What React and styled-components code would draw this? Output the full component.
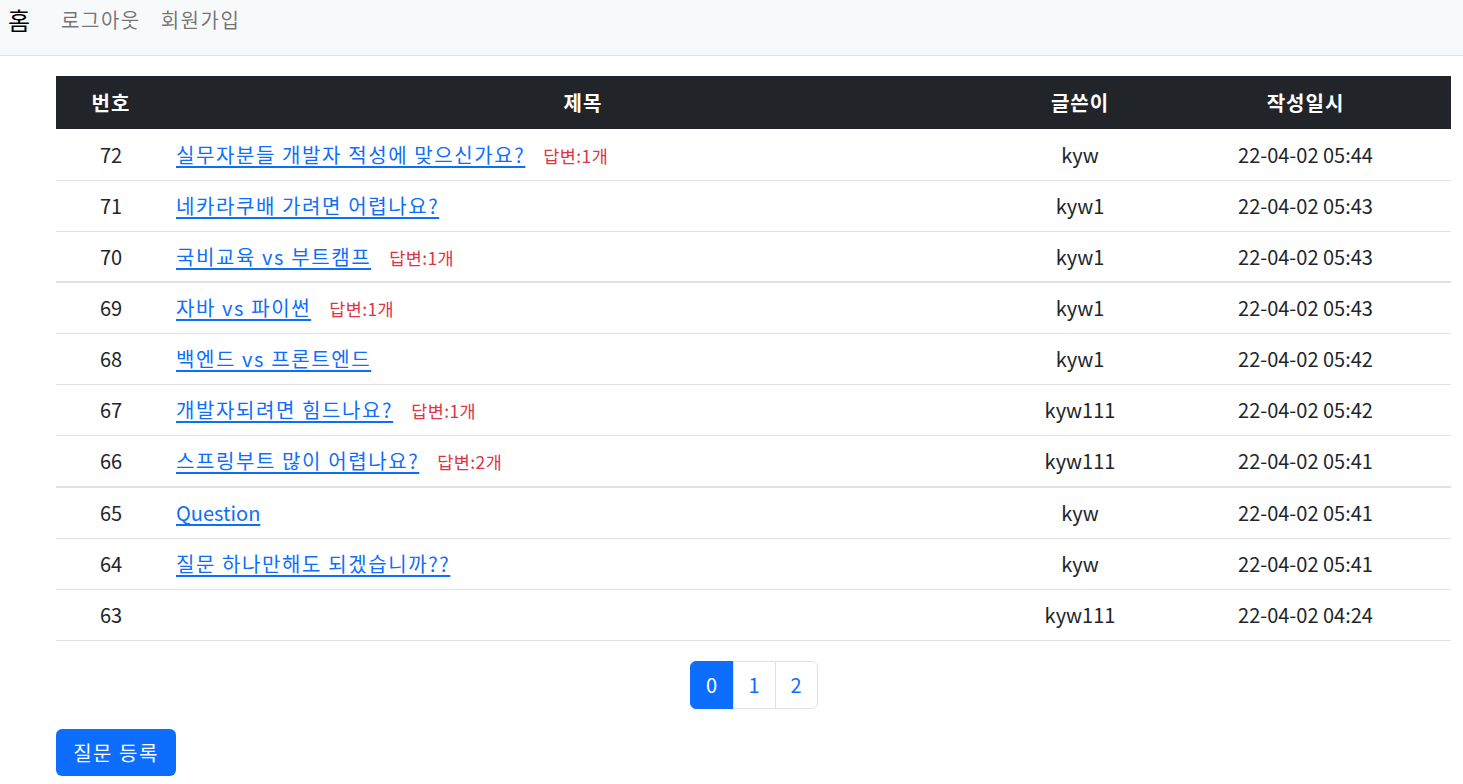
import React from 'react';
import styled, {createGlobalStyle} from 'styled-components';

const GlobalStyle = createGlobalStyle`
    *, *::before, *::after { box-sizing: border-box; }
    body {
        margin: 0;
        font-family: "Noto Sans CJK KR", "Noto Sans", sans-serif;
        color: #212529;
        background: #fff;
    }
`;

const Nav = styled.nav`
    height: 56px;
    background-color: #f8f9fa;
    border-bottom: 1px solid #dee2e6;
    display: flex;
    align-items: flex-start;
    padding: 0 8px;
    gap: 31px;
`;
const Brand = styled.a`
    font-size: 24px;
    line-height: 40px;
    color: #000;
    text-decoration: none;
`;
const NavLinks = styled.div`
    display: flex;
    gap: 20px;
`;
const NavLink = styled.a`
    font-size: 20px;
    line-height: 40px;
    letter-spacing: 1.5px;
    color: rgba(0,0,0,.55);
    text-decoration: none;
`;

const Main = styled.main`
    padding: 20px 12px 0 56px;
`;
const Table = styled.table`
    width: 100%;
    border-collapse: collapse;
    table-layout: fixed;
    font-size: 20px;
`;
const HeadCell = styled.th`
    background-color: #212529;
    color: #fff;
    font-weight: 700;
    height: 53px;
    padding: 0 10px;
    text-align: center;
    letter-spacing: 1px;
    width: ${p => p.w || 'auto'};
`;
const Row = styled.tr`
    border-bottom: ${p => p.thick ? '2px' : '1px'} solid #dee2e6;
`;
const Cell = styled.td`
    height: ${p => p.tall ? '52px' : '51px'};
    padding: 0 10px;
    text-align: ${p => p.left ? 'left' : 'center'};
    vertical-align: middle;
    white-space: nowrap;
`;
const TitleLink = styled.a`
    color: #0d6efd;
    text-decoration: underline;
    text-underline-offset: 3px;
    letter-spacing: ${p => p.ko ? '1.6px' : '0'};
`;
const Answer = styled.span`
    color: #dc3545;
    font-size: 17.5px;
    letter-spacing: 0.4px;
    margin-left: 18px;
`;

const Pager = styled.ul`
    list-style: none;
    display: flex;
    justify-content: center;
    margin: 20px 0 20px;
    padding: 0;
`;
const PageItem = styled.li`
    width: ${p => p.active ? '44px' : '43px'};
    height: 48px;
    display: flex;
    align-items: center;
    justify-content: center;
    font-size: 20px;
    color: ${p => p.active ? '#fff' : '#0d6efd'};
    background: ${p => p.active ? '#0d6efd' : '#fff'};
    border: 1px solid ${p => p.active ? '#0d6efd' : '#dee2e6'};
    margin-left: -1px;
    &:first-child { border-radius: 6px 0 0 6px; margin-left: 0; }
    &:last-child { border-radius: 0 6px 6px 0; }
`;
const Button = styled.button`
    background: #0d6efd;
    color: #fff;
    border: none;
    border-radius: 6px;
    font-family: inherit;
    font-size: 20px;
    letter-spacing: 1.5px;
    width: 120px;
    height: 47px;
`;

const rows = [
    {no: 72, title: '실무자분들 개발자 적성에 맞으신가요?', ans: 1, who: 'kyw', at: '22-04-02 05:44'},
    {no: 71, title: '네카라쿠배 가려면 어렵나요?', who: 'kyw1', at: '22-04-02 05:43'},
    {no: 70, title: '국비교육 vs 부트캠프', ans: 1, who: 'kyw1', at: '22-04-02 05:43', thick: true},
    {no: 69, title: '자바 vs 파이썬', ans: 1, who: 'kyw1', at: '22-04-02 05:43'},
    {no: 68, title: '백엔드 vs 프론트엔드', who: 'kyw1', at: '22-04-02 05:42'},
    {no: 67, title: '개발자되려면 힘드나요?', ans: 1, who: 'kyw111', at: '22-04-02 05:42'},
    {no: 66, title: '스프링부트 많이 어렵나요?', ans: 2, who: 'kyw111', at: '22-04-02 05:41', thick: true, tall: true},
    {no: 65, title: 'Question', who: 'kyw', at: '22-04-02 05:41'},
    {no: 64, title: '질문 하나만해도 되겠습니까??', who: 'kyw', at: '22-04-02 05:41'},
    {no: 63, title: '', who: 'kyw111', at: '22-04-02 04:24'},
];

export default function App() {
    return (<div>
        <GlobalStyle/>
        <Nav>
            <Brand href="#">홈</Brand>
            <NavLinks>
                <NavLink href="#">로그아웃</NavLink>
                <NavLink href="#">회원가입</NavLink>
            </NavLinks>
        </Nav>
        <Main>
            <Table>
                <thead>
                    <tr>
                        <HeadCell w="110px">번호</HeadCell>
                        <HeadCell>제목</HeadCell>
                        <HeadCell w="160px">글쓴이</HeadCell>
                        <HeadCell w="291px">작성일시</HeadCell>
                    </tr>
                </thead>
                <tbody>
                    {rows.map(r => (
                        <Row key={r.no} thick={r.thick}>
                            <Cell tall={r.tall}>{r.no}</Cell>
                            <Cell left tall={r.tall}>
                                {r.title && <TitleLink href="#" ko={/[가-힣]/.test(r.title)}>{r.title}</TitleLink>}
                                {r.ans && <Answer>답변:{r.ans}개</Answer>}
                            </Cell>
                            <Cell tall={r.tall}>{r.who}</Cell>
                            <Cell tall={r.tall}>{r.at}</Cell>
                        </Row>
                    ))}
                </tbody>
            </Table>
            <Pager>
                <PageItem active>0</PageItem>
                <PageItem>1</PageItem>
                <PageItem>2</PageItem>
            </Pager>
            <Button>질문 등록</Button>
        </Main>
    </div>)
}
